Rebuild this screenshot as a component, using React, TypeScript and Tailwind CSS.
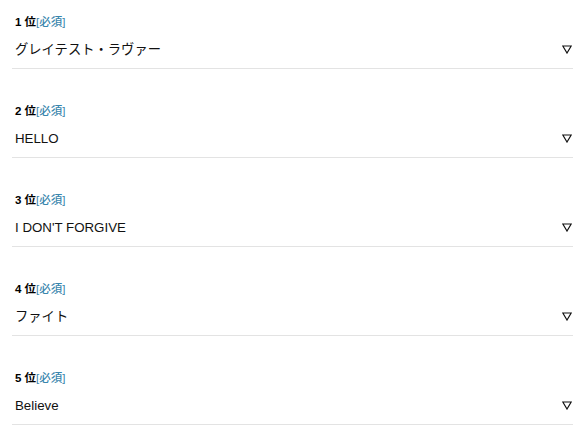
const items = [
  { rank: 1, value: "グレイテスト・ラヴァー" },
  { rank: 2, value: "HELLO" },
  { rank: 3, value: "I DON'T FORGIVE" },
  { rank: 4, value: "ファイト" },
  { rank: 5, value: "Believe" },
];

export default function App() {
  return (
    <div
      className="min-h-screen bg-white pl-[12px] pt-[13px]"
      style={{ fontFamily: '"Liberation Sans", "Noto Sans CJK JP", sans-serif' }}
    >
      <div className="w-[561px]">
        {items.map((item) => (
          <div key={item.rank} className="mb-[33px]">
            <div className="pl-[3px] text-[11.5px] leading-[18px] font-bold text-black">
              {item.rank} 位<span className="font-medium text-[#3a86ad]">[必須]</span>
            </div>
            <div className="flex h-[38px] items-center justify-between border-b border-[#e3e3e3] pl-[3px] pr-[1px]">
              <span className="text-[13.3px] text-[#111]">{item.value}</span>
              <svg width="10" height="9" viewBox="0 0 10 9" className="mt-[-1px]">
                <path d="M0.8 1 H9.2 L5 8 Z" fill="none" stroke="#111" strokeWidth="1.2" strokeLinejoin="miter" />
              </svg>
            </div>
          </div>
        ))}
      </div>
    </div>
  );
}
